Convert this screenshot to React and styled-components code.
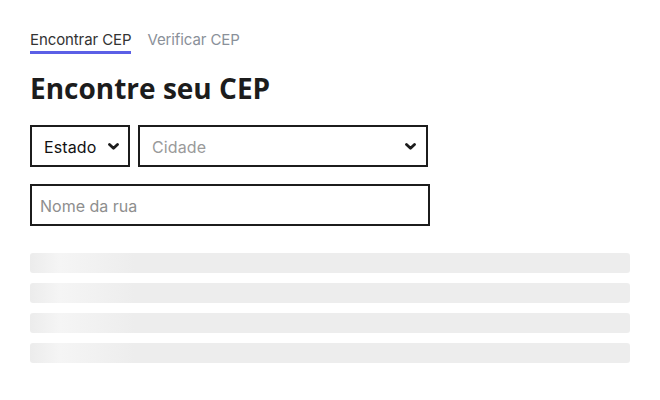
import React from 'react';
import styled, { createGlobalStyle } from 'styled-components';

const GlobalStyle = createGlobalStyle`
  body {
    margin: 0;
    background: #fff;
    font-family: Inter, "Liberation Sans", sans-serif;
  }
`;

const Page = styled.div`
  padding: 31px 30px 0;
  width: 600px;
`;

const Tabs = styled.nav`
  display: flex;
  gap: 16px;
`;

const Tab = styled.div`
  font-size: 15px;
  line-height: 18px;
  padding-bottom: 2px;
  color: ${p => (p.active ? '#333333' : '#8a9099')};
  border-bottom: 3px solid ${p => (p.active ? '#5b5fe6' : 'transparent')};
  letter-spacing: -0.1px;
`;

const Title = styled.h1`
  margin: 17px 0 20px;
  font-family: "Open Sans", sans-serif;
  font-weight: 700;
  font-size: 28px;
  line-height: 34px;
  color: #1c1c1c;
`;

const Row = styled.div`
  display: flex;
  gap: 8px;
`;

const Select = styled.div`
  box-sizing: border-box;
  width: ${p => p.width}px;
  height: 42px;
  border: 2px solid #1c1c1c;
  display: flex;
  align-items: center;
  justify-content: space-between;
  padding: 1px ${p => p.padRight}px 0 12px;
  font-size: 16px;
  letter-spacing: 0.1px;
  color: ${p => (p.placeholder ? '#9a9a9a' : '#111')};
`;

const TextInput = styled.input`
  box-sizing: border-box;
  display: block;
  margin-top: 17px;
  width: 400px;
  height: 42px;
  border: 2px solid #1c1c1c;
  border-radius: 0;
  padding: 1px 8px 0;
  font-family: Inter, "Liberation Sans", sans-serif;
  font-size: 16px;
  outline: none;
  &::placeholder {
    color: #8e8e8e;
  }
`;

const Skeletons = styled.div`
  margin-top: 27px;
  display: flex;
  flex-direction: column;
  gap: 10px;
`;

const Bar = styled.div`
  height: 20px;
  border-radius: 3px;
  background: linear-gradient(90deg, #ececec 0px, #f5f5f5 30px, #ededed 105px, #ededed 100%);
`;

const Chevron = () => (
  <svg width="11" height="7" viewBox="0 0 11 7">
    <polyline points="1.5,1.5 5.5,5.3 9.5,1.5" fill="none" stroke="#1c1c1c" strokeWidth="2.8" strokeLinecap="round" strokeLinejoin="round" />
  </svg>
);

export default function App() {
  return (
    <Page>
      <GlobalStyle />
      <Tabs>
        <Tab active>Encontrar CEP</Tab>
        <Tab>Verificar CEP</Tab>
      </Tabs>
      <Title>Encontre seu CEP</Title>
      <Row>
        <Select width={100} padRight={9}>
          Estado
          <Chevron />
        </Select>
        <Select width={290} padRight={10} placeholder>
          Cidade
          <Chevron />
        </Select>
      </Row>
      <TextInput placeholder="Nome da rua" />
      <Skeletons>
        {[0, 1, 2, 3].map(i => (
          <Bar key={i} />
        ))}
      </Skeletons>
    </Page>
  );
}
